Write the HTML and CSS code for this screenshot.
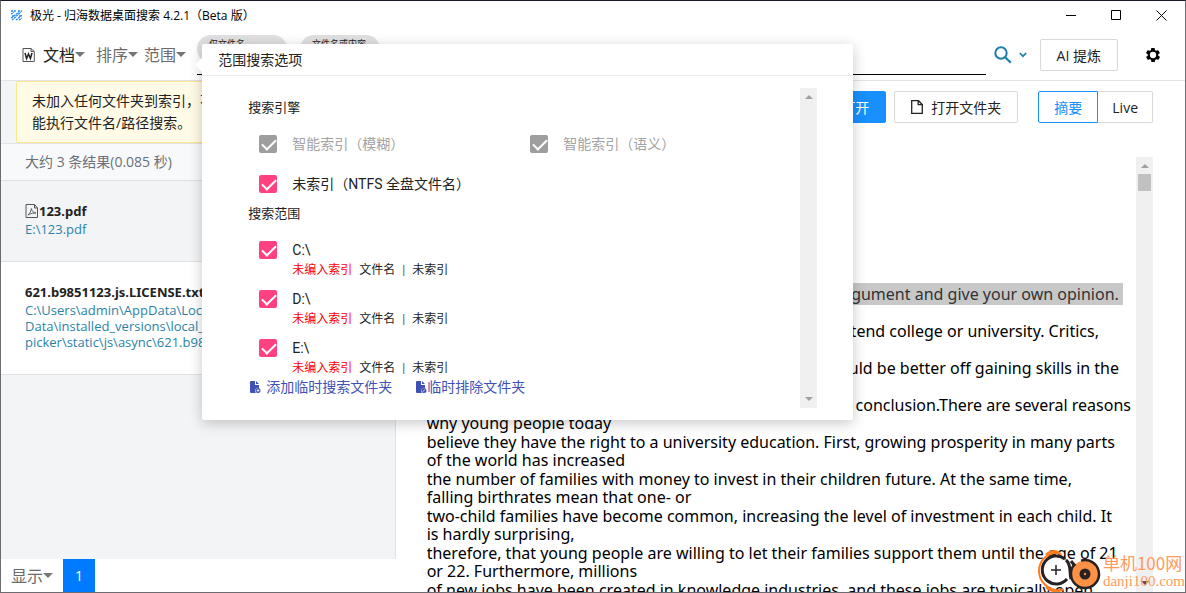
FILE: index.html
```
<!DOCTYPE html>
<html lang="zh-CN">
<head>
<meta charset="utf-8">
<title>极光 - 归海数据桌面搜索</title>
<link rel="stylesheet" href="styles.css">
</head>
<body>
<div class="window">
  <header class="titlebar">
    <svg class="app-icon" width="11" height="11" viewBox="0 0 11 11" fill="none" stroke="#2488f5" stroke-width="1.3" stroke-dasharray="2 .8"><path d="M0 1h5M7 1h4M0 4l3-2M3 6l5-4M1 10l9-8M0 8l2-1M5 10l6-5M8 10l3-2M1 6h2M8 6h3"/></svg>
    <h1 class="app-title">极光 - 归海数据桌面搜索 4.2.1（Beta 版）</h1>
    <div class="window-controls">
      <button class="win-btn" aria-label="最小化"><svg width="11" height="11" stroke="#000" fill="none"><path d="M0 5.5h10"/></svg></button>
      <button class="win-btn" aria-label="最大化"><svg width="11" height="11" stroke="#000" fill="none"><path d="M.5.5h9v9h-9z"/></svg></button>
      <button class="win-btn" aria-label="关闭"><svg width="11" height="11" stroke="#000" fill="none"><path d="M.5.5l10 10M10.5.5l-10 10"/></svg></button>
    </div>
  </header>

  <div class="toolbar">
    <nav class="filters">
      <svg class="word-icon" width="13" height="14" viewBox="0 0 13 14" fill="none"><path d="M1 .5h8l3.300 3v10H1z" stroke="#555"/><path d="M9 .5v3h3" stroke="#555"/><path d="M3 5l1.600 5.500L6.500 6l1.900 4.500L10 5" stroke="#222" stroke-width="1.500"/></svg>
      <button class="menu-btn menu-btn-active">文档<span class="caret"></span></button>
      <button class="menu-btn">排序<span class="caret"></span></button>
      <button class="menu-btn">范围<span class="caret"></span></button>
    </nav>
    <div class="search-field">
      <div class="chips"><span class="chip">仅文件名</span><span class="chip">文件名或内容</span></div>
      <input class="search-input" type="text" aria-label="搜索">
    </div>
    <button class="icon-btn search-btn" aria-label="执行搜索">
      <svg width="18" height="18" viewBox="0 0 18 18" fill="none" stroke="#1c7fae" stroke-width="2"><circle cx="7" cy="7" r="5.700"/><path d="M11.200 11.200l5.600 5.600" stroke-width="2.200"/></svg>
      <svg width="8" height="6" viewBox="0 0 8 6" fill="none" stroke="#1c7fae" stroke-width="1.700"><path d="M.8 1L4 4.200 7.200 1"/></svg>
    </button>
    <button class="btn">AI 提炼</button>
    <button class="icon-btn gear-btn" aria-label="设置">
      <svg width="14" height="14" viewBox="2 2 20 20"><path fill-rule="evenodd" d="M19.400 13c0-.3.100-.6.100-1s0-.7-.1-1l2.100-1.600c.2-.2.200-.4.100-.6l-2-3.500c-.1-.2-.4-.3-.6-.2l-2.500 1c-.5-.4-1.100-.7-1.700-1l-.4-2.600c0-.3-.2-.5-.5-.5h-4c-.3 0-.5.2-.5.400l-.4 2.700c-.6.200-1.100.600-1.700 1l-2.500-1c-.2-.1-.5 0-.6.200l-2 3.500c-.1.200-.1.500.1.600L4.600 11c0 .3-.1.700-.1 1s0 .7.100 1l-2.100 1.600c-.2.200-.2.400-.1.600l2 3.500c.1.200.4.300.6.200l2.500-1c.5.400 1.100.7 1.700 1l.4 2.600c0 .3.200.5.500.5h4c.3 0 .5-.2.500-.4l.4-2.700c.6-.2 1.100-.6 1.700-1l2.500 1c.2.100.5 0 .6-.2l2-3.500c.1-.2.100-.5-.1-.6zM12 16.500a4.500 4.500 0 110-9 4.500 4.500 0 010 9z"/></svg>
    </button>
  </div>

  <div class="content">
    <aside class="sidebar">
      <div class="results">
        <div class="notice">未加入任何文件夹到索引，不<br>能执行文件名/路径搜索。</div>
        <div class="summary">大约 3 条结果(0.085 秒)</div>
        <ul class="result-list">
          <li class="result result-current">
            <h2 class="result-name"><svg width="14" height="14" viewBox="0 0 14 14" fill="none" stroke="#555"><path d="M1 .5h8.500L12.500 4v9.500H1zM9.500.5V4h3"/><path d="M3 11c1.700-1.400 3.400-4.300 3.300-6.500 1 3 2.200 4.300 4.700 4.600-2.500-.2-5 .2-8 1.900z" stroke-width=".9"/></svg>123.pdf</h2>
            <a class="result-path" href="#">E:\123.pdf</a>
          </li>
          <li class="result">
            <h2 class="result-name">621.b9851123.js.LICENSE.txt</h2>
            <a class="result-path" href="#">C:\Users\admin\AppData\Local\<br>Data\installed_versions\local_file_<br>picker\static\js\async\621.b9851123</a>
          </li>
        </ul>
      </div>
      <footer class="pager">
        <button class="menu-btn">显示<span class="caret"></span></button>
        <button class="page-current">1</button>
      </footer>
    </aside>

    <main class="preview">
      <div class="preview-actions">
        <button class="btn btn-primary">打开</button>
        <button class="btn"><svg width="12" height="14" viewBox="0 0 12 14" fill="none" stroke="#222" stroke-width="1.300"><path d="M.7.700h6.800l3.800 3.800v8.800H.7z"/><path d="M7.200.700v4h4"/></svg>打开文件夹</button>
        <div class="tabs"><button class="btn tab tab-active">摘要</button><button class="btn tab">Live</button></div>
      </div>
      <div class="document">
        <article class="doc-text">
          <p class="doc-tail indent-s"><mark>Discuss this argument and give your own opinion.&nbsp;</mark></p>
          <p class="doc-tail indent-l">attend college or university. Critics,</p>
          <p class="doc-tail indent-m">would be better off gaining skills in the</p>
          <p class="doc-tail doc-tail-last">conclusion.There are several reasons</p>
          <p>why young people today</p>
          <p>believe they have the right to a university education. First, growing prosperity in many parts<br>of the world has increased</p>
          <p>the number of families with money to invest in their children future. At the same time,<br>falling birthrates mean that one- or</p>
          <p>two-child families have become common, increasing the level of investment in each child. It<br>is hardly surprising,</p>
          <p>therefore, that young people are willing to let their families support them until the age of 21<br>or 22. Furthermore, millions</p>
          <p>of new jobs have been created in knowledge industries, and these jobs are typically open</p>
        </article>
        <div class="scrollbar"><i class="arrow-up"></i><span class="thumb"></span><i class="arrow-down arrow-dark"></i></div>
      </div>
    </main>
  </div>

  <section class="popover" role="dialog" aria-labelledby="scope-title">
    <h2 class="popover-title" id="scope-title">范围搜索选项</h2>
    <div class="popover-body">
      <form class="scope">
        <h3 class="scope-head">搜索引擎</h3>
        <div class="engines">
          <label class="option option-off"><input type="checkbox" class="check" checked disabled>智能索引（模糊）</label>
          <label class="option option-off"><input type="checkbox" class="check" checked disabled>智能索引（语义）</label>
          <label class="option"><input type="checkbox" class="check" checked>未索引（NTFS 全盘文件名）</label>
        </div>
        <h3 class="scope-head">搜索范围</h3>
        <div class="drives">
          <div class="drive"><label class="option"><input type="checkbox" class="check" checked>C:\</label><p class="drive-info"><span class="warn">未编入索引</span><span>文件名</span><span class="bar">|</span><span>未索引</span></p></div>
          <div class="drive"><label class="option"><input type="checkbox" class="check" checked>D:\</label><p class="drive-info"><span class="warn">未编入索引</span><span>文件名</span><span class="bar">|</span><span>未索引</span></p></div>
          <div class="drive"><label class="option"><input type="checkbox" class="check" checked>E:\</label><p class="drive-info"><span class="warn">未编入索引</span><span>文件名</span><span class="bar">|</span><span>未索引</span></p></div>
        </div>
        <div class="scope-links">
          <a class="scope-link scope-link-add" href="#"><svg width="11" height="13" viewBox="0 0 11 13" fill="#3f51b5"><path d="M1 0h4v4h4v3a3 3 0 00-3 5H1a1 1 0 01-1-1V1a1 1 0 011-1zM6 0l3 3H6z"/><path fill-rule="evenodd" d="M8 7a2.500 2.500 0 110 5 2.500 2.500 0 010-5zm-.4 1v1.200H6.500v.7h1.100V11h.8V9.900h1.100v-.7H8.400V8z"/></svg>添加临时搜索文件夹</a>
          <a class="scope-link" href="#"><svg width="11" height="13" viewBox="0 0 11 13" fill="#3f51b5"><path d="M1 0h4v4h4v3a3 3 0 00-3 5H1a1 1 0 01-1-1V1a1 1 0 011-1zM6 0l3 3H6z"/><path d="M8 7a2.500 2.500 0 110 5 2.500 2.500 0 010-5z"/><path d="M6.600 10.700l2.800-2.400" stroke="#fff" stroke-width=".8"/></svg>临时排除文件夹</a>
        </div>
      </form>
      <div class="scrollbar"><i class="arrow-up"></i><i class="arrow-down"></i></div>
    </div>
  </section>

  <div class="watermark">
    <svg width="64" height="42" viewBox="0 0 64 42" fill="none">
      <path d="M21 3C10 2 1 10 1 21s9 19 21 20" stroke="#ff7b1c" stroke-width="2"/>
      <path d="M8 5c5-5 11-5 15 0M8 37c5 5 13 5 17 2" stroke="#ff7b1c" stroke-width="2.500"/>
      <circle cx="18" cy="20" r="14" fill="#fff"/>
      <path d="M27 9a14 14 0 10 2 20" stroke="#282222" stroke-width="3"/>
      <path d="M18 15v10M13 20h10" stroke="#282222" stroke-width="1.500"/>
      <path d="M28 10c6 5 3 13 5 19" stroke="#282222" stroke-width="3"/>
      <circle cx="47" cy="24" r="13.500" fill="#ff9147"/>
      <path d="M43 10.600a14 14 0 11-10 13c0-4 1-7 4-10" stroke="#282222" stroke-width="2.500"/>
      <path d="M33 11l4 5" stroke="#282222" stroke-width="3"/>
      <circle cx="47" cy="24" r="5.500" fill="#282222"/><circle cx="47" cy="24" r="1.200" fill="#ff9147"/>
    </svg>
    <div class="watermark-text"><span class="watermark-name">单机100网</span><span class="watermark-site">danji100.com</span></div>
  </div>
</div>
</body>
</html>
```
FILE: styles.css
```
* { box-sizing: border-box; }
body { margin: 0; font-family: "Open Sans", "Noto Sans CJK SC", sans-serif; font-size: 14px; color: #222; background: #fff; }
h1, h2, h3, p, ul { margin: 0; padding: 0; font-weight: 400; }
ul { list-style: none; }
button { margin: 0; padding: 0; border: 0; background: none; font: inherit; color: inherit; }
a { text-decoration: none; }
svg { flex: none; }

.window { position: relative; display: flex; flex-direction: column; height: 100vh; border: 1px solid #6b6b70; border-top-color: #1b1728; overflow: hidden; background: #fff; }

.titlebar { display: flex; align-items: center; flex: none; height: 28px; padding-left: 10px; }
.app-title { margin-left: 8px; font-size: 12px; color: #000; }
.window-controls { display: flex; margin-left: auto; padding-right: 1px; }
.win-btn { display: grid; place-items: center; width: 45px; height: 28px; }

.toolbar { display: flex; align-items: center; flex: none; height: 52px; padding-right: 25px; border-bottom: 1px solid #e2e4ea; }
.filters { display: flex; align-items: center; padding: 0 5px 0 21px; }
.word-icon { margin-right: 8px; }
.menu-btn { display: flex; align-items: center; margin-right: 6px; font-size: 16px; line-height: 24px; color: #6b6b6b; }
.menu-btn-active { margin-right: 11px; color: #222; }
.caret { border: 5px solid transparent; border-top-color: #777; border-bottom: 0; }
.search-field { display: flex; flex-direction: column; flex: 1; height: 40px; align-self: flex-start; margin-top: 6px; border-bottom: 1px solid #000; }
.chips { display: flex; gap: 13px; height: 20px; }
.chip { height: 28px; padding: 0 12px; border-radius: 14px; background: #e0e0e0; font-size: 9px; line-height: 17px; min-width: 80px; flex: none; }
.chip:first-child { min-width: 90px; }
.search-input { flex: 1; min-height: 0; border: 0; background: none; outline: 0; }
.icon-btn { display: flex; align-items: center; }
.search-btn { gap: 7px; margin: 0 13px 0 8px; }
.gear-btn { margin-left: 28px; }
.btn { display: flex; align-items: center; justify-content: center; gap: 8px; height: 32px; padding: 0 16px; border: 1px solid #d9d9d9; border-radius: 2px; background: #fff; font-size: 14px; }
.btn-primary { border-color: #1890ff; background: #1890ff; color: #fff; }
.tabs { display: flex; margin-left: 12px; }
.tab { border-left: 0; border-radius: 0 2px 2px 0; padding: 0 14px; }
.tab-active { padding: 0 15px; border: 1px solid #1890ff; border-radius: 2px 0 0 2px; color: #1890ff; }

.content { display: grid; grid-template-columns: 1fr 2fr; flex: 1; min-height: 0; }
.sidebar { display: flex; flex-direction: column; min-width: 0; min-height: 0; }
.results { flex: 1; min-height: 0; border-right: 1px solid #dfe2e5; background: #f2f4f6; overflow: hidden; }
.notice { margin-left: 15px; padding: 8px 15px; border: 1px solid #ffe58f; border-radius: 2px; background: #fffbe6; line-height: 22px; white-space: nowrap; }
.summary { padding: 7px 24px; border-top: 1px solid #e2e4e8; border-bottom: 1px solid #dfe2e5; background: #f8f9fb; line-height: 22px; color: #6b7078; }
.result { padding: 20px 24px 24px; border-bottom: 1px solid #dfe2e5; background: #fff; white-space: nowrap; }
.result-current { background: #f2f4f6; }
.result-name { display: flex; align-items: center; font-family: "Noto Sans", sans-serif; font-size: 13px; font-weight: 700; line-height: 20px; }
.result-path { display: block; font-size: 13px; line-height: 16px; color: #2b83a8; }
.pager { display: flex; flex: none; height: 33px; padding-left: 10px; background: #fff; }
.pager .menu-btn { margin-right: 10px; }
.page-current { width: 32px; background: #007bff; color: #fff; }

.preview { display: flex; flex-direction: column; min-width: 0; min-height: 0; padding: 10px 32px 0 31px; }
.preview-actions { display: flex; justify-content: flex-end; flex: none; gap: 8px; }
.document { display: flex; justify-content: space-between; flex: 1; min-height: 0; margin-top: 34px; }
.doc-text { flex: 1; min-width: 0; padding-top: 128px; padding-right: 5px; overflow: hidden; font-family: "Noto Sans", "Open Sans", sans-serif; font-size: 16px; line-height: 18px; color: #000; white-space: nowrap; }
.doc-text p { padding-bottom: 1px; }
.doc-text .doc-tail { padding-bottom: 19px; text-align: right; }
.doc-text .doc-tail-last { padding-bottom: 0; }
.doc-text .indent-s { margin-right: 8px; }
.doc-text .indent-m { margin-right: 12px; }
.doc-text .indent-l { margin-right: 32px; }
.doc-text mark { background: #c8c8c8; color: #333; }

.scrollbar { display: flex; flex-direction: column; align-items: center; flex: none; width: 17px; padding: 7px 0; background: #f0f0f0; }
.arrow-up { border: 4px solid transparent; border-bottom-color: #a0a0a0; border-top: 0; }
.arrow-down { margin-top: auto; border: 4px solid transparent; border-top-color: #a0a0a0; border-bottom: 0; }
.arrow-dark { border-top-color: #505050; }
.thumb { width: 13px; height: 17px; margin-top: 6px; background: #c1c1c1; }

.popover { position: absolute; top: 43px; left: 17%; width: 55%; border-radius: 2px; background: #fff; box-shadow: 0 3px 14px rgba(0, 0, 0, .22); font-family: Roboto, "Noto Sans CJK SC", sans-serif; }
.popover::before { content: ""; position: absolute; top: 16px; left: -5px; width: 10px; height: 10px; background: #fff; transform: rotate(45deg); }
.popover-title { padding: 5px 16px 4px; border-bottom: 1px solid #ececec; font-size: 14px; line-height: 22px; }
.popover-body { display: flex; justify-content: space-between; padding: 12px 36px 12px 46px; }
.scope { flex: 1; padding: 10px 0 12px; }
.scope-head { font-size: 13px; line-height: 20px; }
.engines { display: grid; grid-template-columns: 1fr 1fr; row-gap: 20px; padding: 16px 10px 10px 0; }
.option { display: flex; align-items: center; gap: 15px; margin-left: 11px; font-size: 14px; line-height: 20px; white-space: nowrap; }
.option-off { color: #a3a3a3; }
.check { appearance: none; position: relative; flex: none; width: 18px; height: 18px; margin: 0; border-radius: 2px; background: #ff4081; }
.check::after { content: ""; position: absolute; left: 6px; top: 1px; width: 6px; height: 12px; border: solid #fff; border-width: 0 2px 2px 0; transform: rotate(45deg); }
.check:disabled { background: #9e9e9e; }
.drives { display: grid; row-gap: 9px; padding-top: 16px; }
.drive-info { display: flex; padding-left: 44px; font-size: 12px; line-height: 20px; }
.drive-info span { margin-right: 7px; }
.warn { color: #f00; }
.bar { color: #555; }
.scope-links { display: flex; gap: 22px; }
.scope-link { display: flex; align-items: center; padding-left: 2px; font-size: 14px; line-height: 18px; color: #3f51b5; white-space: nowrap; }
.scope-link-add { gap: 5px; }

.watermark { position: absolute; right: 0; bottom: 0; display: flex; gap: 1px; color: #ff9a5c; }
.watermark-text { display: flex; flex-direction: column; font-family: "Liberation Serif", "Noto Sans CJK SC", serif; line-height: 18px; padding-top: 4px; }
.watermark-name { font-family: "Noto Sans CJK SC", sans-serif; font-size: 17px; }
.watermark-site { font-size: 15px; }
```
